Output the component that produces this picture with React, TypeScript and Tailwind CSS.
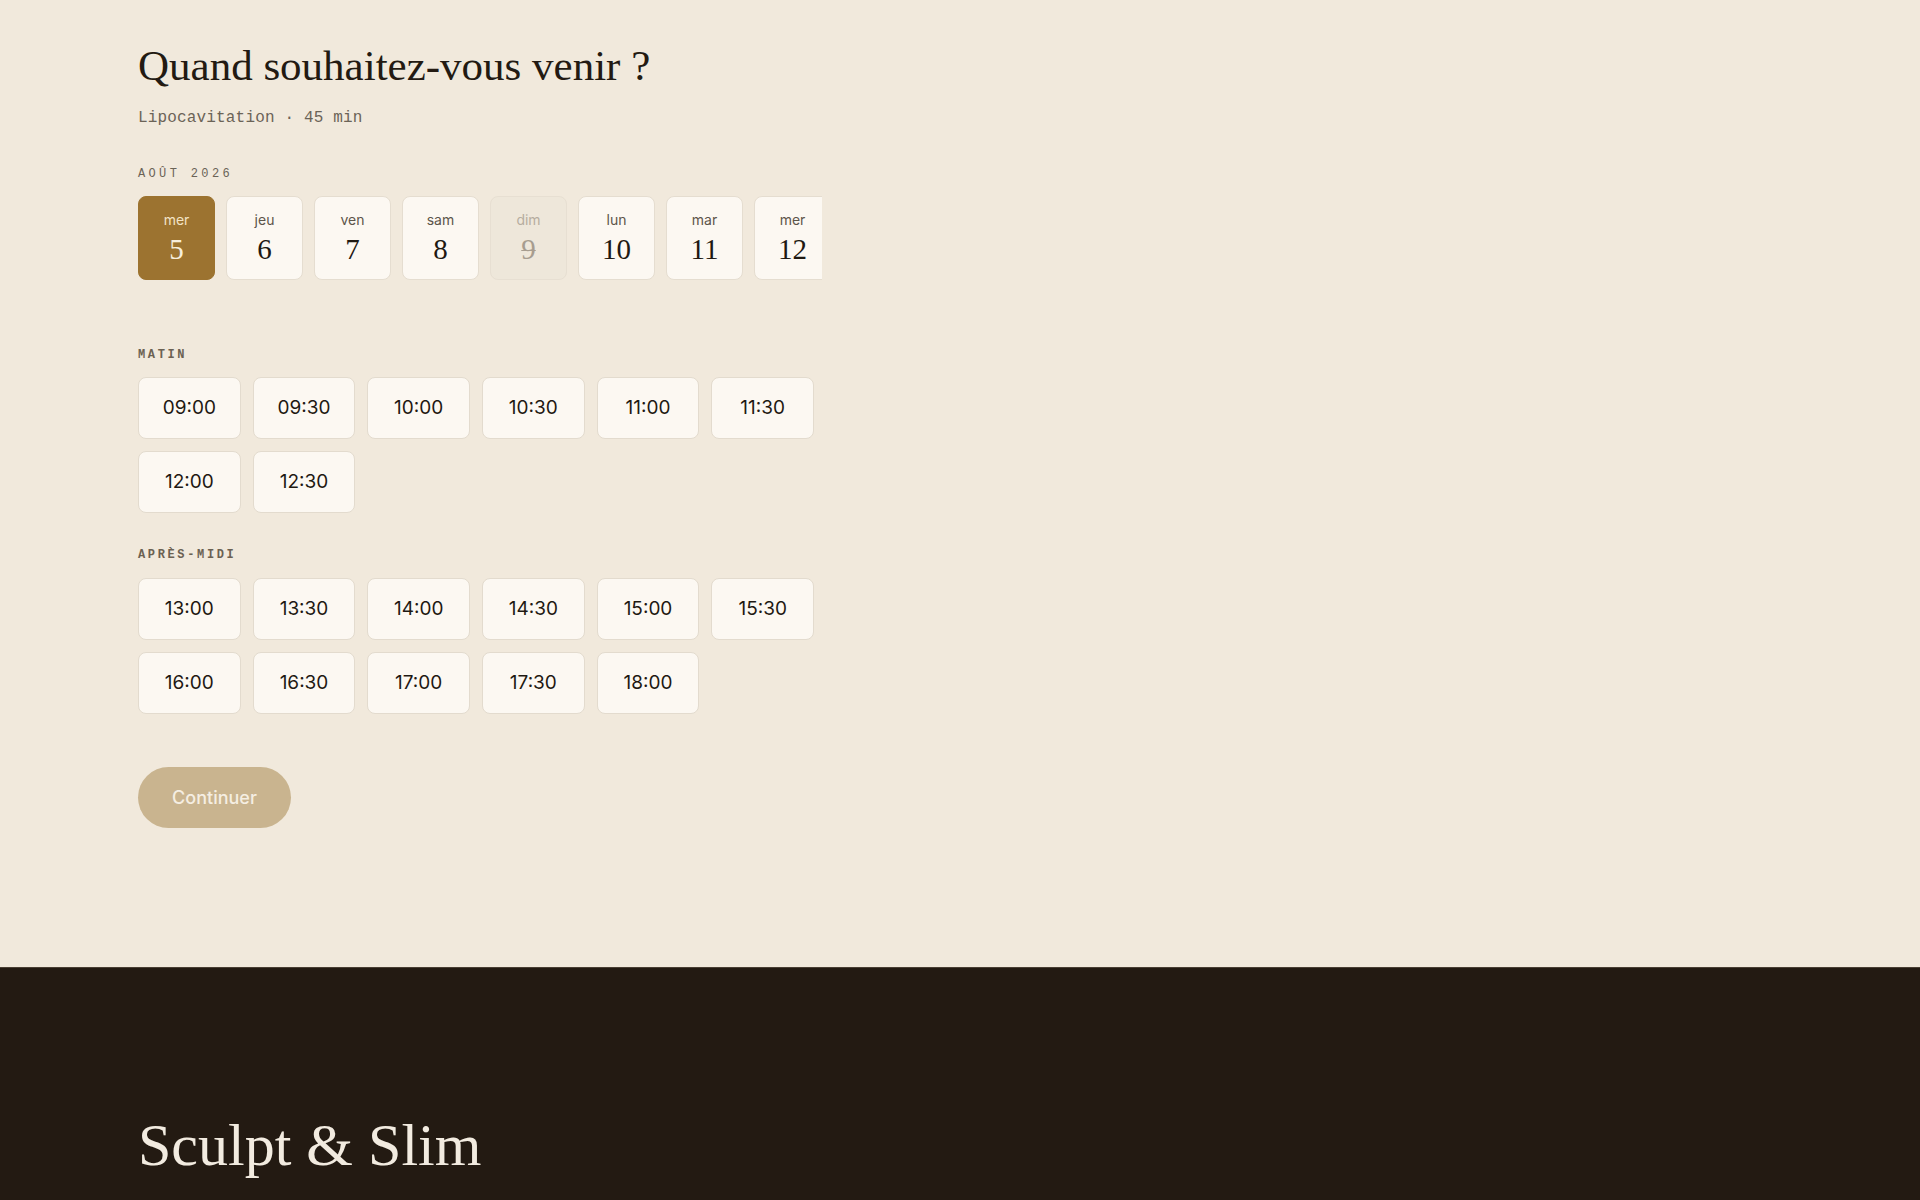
import React from "react";

const serif = { fontFamily: '"Liberation Serif", "Times New Roman", serif' };

const dates = [
  { d: "mer", n: "5", state: "selected" },
  { d: "jeu", n: "6", state: "normal" },
  { d: "ven", n: "7", state: "normal" },
  { d: "sam", n: "8", state: "normal" },
  { d: "dim", n: "9", state: "disabled" },
  { d: "lun", n: "10", state: "normal" },
  { d: "mar", n: "11", state: "normal" },
  { d: "mer", n: "12", state: "normal" },
];

const matin = ["09:00", "09:30", "10:00", "10:30", "11:00", "11:30", "12:00", "12:30"];
const apres = ["13:00", "13:30", "14:00", "14:30", "15:00", "15:30", "16:00", "16:30", "17:00", "17:30", "18:00"];

function DateCard({ d, n, state }: { d: string; n: string; state: string }) {
  const base = "flex h-[84px] w-[77px] shrink-0 flex-col items-center rounded-[8px] border pt-[13px]";
  if (state === "selected") {
    return (
      <div className={`${base} border-[#9c7330] bg-[#9c7330]`}>
        <span className="text-[14px] leading-5 text-[#f3e4c6]">{d}</span>
        <span className="mt-[3px] text-[29px] leading-8 text-[#f7eedc]" style={serif}>{n}</span>
      </div>
    );
  }
  if (state === "disabled") {
    return (
      <div className={`${base} border-[#e7dfd2] bg-[#eee7da]`}>
        <span className="text-[14px] leading-5 text-[#b6ad9f]">{d}</span>
        <span className="mt-[3px] text-[29px] leading-8 text-[#a79d8f] line-through decoration-1" style={serif}>{n}</span>
      </div>
    );
  }
  return (
    <div className={`${base} border-[#e5ddd0] bg-[#fcf8f2]`}>
      <span className="text-[14px] leading-5 text-[#5d554a]">{d}</span>
      <span className="mt-[3px] text-[29px] leading-8 text-[#1f1912]" style={serif}>{n}</span>
    </div>
  );
}

function Slot({ t }: { t: string }) {
  return (
    <div className="flex h-[62px] items-center justify-center rounded-[8px] border border-[#e3dbce] bg-[#fcf8f2] text-[19px] text-[#1f1912]">
      {t}
    </div>
  );
}

export default function App() {
  return (
    <div className="min-h-screen bg-[#f1e9dc]" style={{ fontFamily: 'Inter, "Noto Sans", sans-serif' }}>
      <main className="px-[138px] pt-[41px] pb-[139px]">
        <div className="w-[684px]">
          <h1 className="text-[43px] leading-[50px] text-[#231a12]" style={serif}>
            Quand souhaitez-vous venir ?
          </h1>
          <p className="mt-[15px] font-['Liberation_Mono',monospace] text-[16px] leading-6 tracking-[0.01em] text-[#6b6357]">
            Lipocavitation · 45 min
          </p>

          <div className="mt-[36px] font-['Liberation_Mono',monospace] text-[12px] leading-4 tracking-[0.28em] text-[#6b6357]">
            AOÛT 2026
          </div>
          <div className="mt-[14px] flex gap-[11px] overflow-hidden">
            {dates.map((x, i) => (
              <DateCard key={i} {...x} />
            ))}
          </div>

          <div className="mt-[67px] font-['Liberation_Mono',monospace] text-[12px] font-bold leading-4 tracking-[0.22em] text-[#6b6152]">
            MATIN
          </div>
          <div className="mt-[14px] grid w-[676px] grid-cols-6 gap-[12px]">
            {matin.map((t) => (
              <Slot key={t} t={t} />
            ))}
          </div>

          <div className="mt-[34px] font-['Liberation_Mono',monospace] text-[12px] font-bold leading-4 tracking-[0.22em] text-[#6b6152]">
            APRÈS-MIDI
          </div>
          <div className="mt-[15px] grid w-[676px] grid-cols-6 gap-[12px]">
            {apres.map((t) => (
              <Slot key={t} t={t} />
            ))}
          </div>

          <button className="mt-[53px] flex h-[61px] w-[153px] items-center justify-center rounded-full bg-[#c9b48f] text-[18px] font-medium text-[#f5eee2]">
            Continuer
          </button>
        </div>
      </main>
      <footer className="border-t border-[#4a3f33] bg-[#231a12] px-[138px] pt-[147px] pb-[80px]">
        <div className="text-[60px] leading-none text-[#f2ebe0]" style={serif}>
          Sculpt &amp; Slim
        </div>
      </footer>
    </div>
  );
}
